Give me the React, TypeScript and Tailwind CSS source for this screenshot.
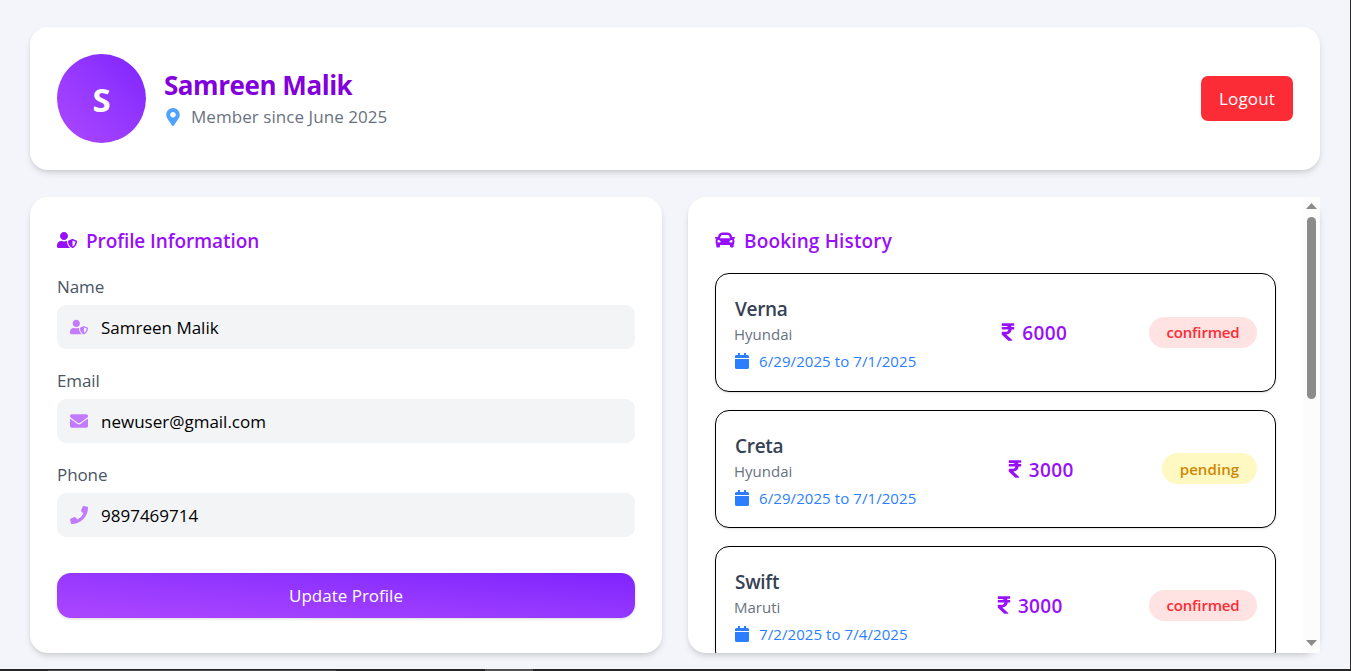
import type { ReactNode } from "react";
import {
  FaCalendar,
  FaCar,
  FaEnvelope,
  FaMapMarkerAlt,
  FaPhone,
  FaRupeeSign,
  FaUserShield,
} from "react-icons/fa";

type Status = "confirmed" | "pending";

interface Booking {
  model: string;
  brand: string;
  dates: string;
  price: number;
  status: Status;
}

const bookings: Booking[] = [
  { model: "Verna", brand: "Hyundai", dates: "6/29/2025 to 7/1/2025", price: 6000, status: "confirmed" },
  { model: "Creta", brand: "Hyundai", dates: "6/29/2025 to 7/1/2025", price: 3000, status: "pending" },
  { model: "Swift", brand: "Maruti", dates: "7/2/2025 to 7/4/2025", price: 3000, status: "confirmed" },
];

const statusStyles: Record<Status, string> = {
  confirmed: "bg-[#ffe2e2] text-[#fb2c36] tracking-[-0.15px] w-[108px]",
  pending: "bg-[#fef9c2] text-[#d08700] tracking-[0.1px] w-[95px]",
};

const cardShadow = "shadow-[0_4px_7px_-1px_rgba(0,0,0,0.12),0_2px_5px_-2px_rgba(0,0,0,0.12)]";

function Field({ label, value, icon }: { label: string; value: string; icon: ReactNode }) {
  return (
    <div>
      <div className="mb-[5px] h-[27px] text-[17px] leading-[27px] tracking-[-0.1px] text-[#4a5565]">{label}</div>
      <div className="flex h-[44px] items-center rounded-[9px] bg-[#f3f4f6] pl-[13px]">
        <span className="mr-[13px] text-[18px] text-[#c27aff]">{icon}</span>
        <span className="text-[17px] leading-[27px] text-black">{value}</span>
      </div>
    </div>
  );
}

function BookingCard({ booking }: { booking: Booking }) {
  return (
    <div className="flex h-[118.5px] shrink-0 items-center justify-between rounded-[14px] border border-black bg-white px-[18px] shadow-sm">
      <div>
        <div className="h-[31px] pl-px text-[19px] leading-[34px] font-semibold tracking-[-0.3px] text-[#364153]">
          {booking.model}
        </div>
        <div className="h-[22px] text-[15px] leading-[22px] text-[#6a7282]">{booking.brand}</div>
        <div className="mt-[5px] flex h-[22px] items-center text-[#2b7fff]">
          <FaCalendar className="mr-[9px] text-[16px]" />
          <span className="text-[15px] leading-[22px] tracking-[0.08px]">{booking.dates}</span>
        </div>
      </div>
      <div className="flex items-center text-[#9810fa]">
        <FaRupeeSign className="mr-[4px] text-[20px]" />
        <span className="pt-[3px] text-[19px] leading-[31px] font-semibold tracking-[0.35px]">{booking.price}</span>
      </div>
      <div
        className={`flex h-[31px] items-center justify-center rounded-full text-[15px] font-semibold ${statusStyles[booking.status]}`}
      >
        {booking.status}
      </div>
    </div>
  );
}

function Scrollbar() {
  return (
    <div className="flex w-[17px] shrink-0 flex-col items-center bg-[#fcfcfc]">
      <svg className="mt-[6px] h-[6px] w-[11px]" viewBox="0 0 11 6" fill="#8b8b8b">
        <path d="M5.5 0L11 6H0z" />
      </svg>
      <div className="mt-[8px] h-[182px] w-[9px] rounded-full bg-[#8b8b8b]" />
      <div className="flex-1" />
      <svg className="mb-[7px] h-[6px] w-[11px]" viewBox="0 0 11 6" fill="#8b8b8b">
        <path d="M0 0h11L5.5 6z" />
      </svg>
    </div>
  );
}

export default function App() {
  return (
    <div className="flex h-[671px] w-[1351px] flex-col overflow-hidden bg-[#f4f5fa] font-['Open_Sans','Noto_Sans',sans-serif]">
      <div className="flex h-[669px] flex-col gap-[27px] border-r border-[#2b2b2d] px-[30px] pt-[27px]">
        <header
          className={`flex h-[143px] shrink-0 items-center justify-between rounded-[18px] bg-white px-[27px] ${cardShadow}`}
        >
          <div className="flex items-center gap-[18px]">
            <div className="flex size-[89px] items-center justify-center rounded-full bg-linear-to-tr from-[#ad46ff] to-[#7f22fe] pt-[2px] text-[33px] font-bold text-white">
              S
            </div>
            <div>
              <h1 className="h-[36px] text-[26px] leading-[36px] font-bold tracking-[-0.45px] text-[#8200db]">
                Samreen Malik
              </h1>
              <div className="flex h-[27px] items-center">
                <FaMapMarkerAlt className="mr-[9px] text-[18px] text-[#51a2ff]" />
                <span className="text-[17px] leading-[27px] tracking-[0.06px] text-[#6a7282]">
                  Member since June 2025
                </span>
              </div>
            </div>
          </div>
          <button className="h-[45px] w-[92px] rounded-[7px] bg-[#fb2c36] text-[17px] tracking-[0.2px] text-white">
            Logout
          </button>
        </header>

        <main className="flex h-[456px] shrink-0 gap-[26px]">
          <section className={`flex w-[632px] flex-col rounded-[18px] bg-white px-[27px] pt-[27px] ${cardShadow}`}>
            <h2 className="mb-[18px] flex h-[31px] shrink-0 items-center text-[19px] font-semibold tracking-[-0.1px] text-[#9810fa]">
              <FaUserShield className="mr-[9px] text-[20px]" />
              <span className="pt-[4px]">Profile Information</span>
            </h2>
            <div className="flex flex-col gap-[18px]">
              <Field label="Name" value="Samreen Malik" icon={<FaUserShield />} />
              <Field label="Email" value="newuser@gmail.com" icon={<FaEnvelope />} />
              <Field label="Phone" value="9897469714" icon={<FaPhone />} />
            </div>
            <button className="mt-[36px] h-[45px] shrink-0 rounded-[14px] bg-linear-to-tr from-[#ad46ff] to-[#7f22fe] text-[17px] text-white shadow-[0_1px_3px_rgba(0,0,0,0.15)]">
              Update Profile
            </button>
          </section>

          <section className={`flex w-[632px] rounded-[18px] bg-white ${cardShadow}`}>
            <div className="flex flex-1 flex-col overflow-hidden rounded-l-[18px] pt-[27px] pr-[27px] pl-[27px]">
              <h2 className="mb-[18px] flex h-[31px] shrink-0 items-center text-[19px] font-semibold tracking-[0.15px] text-[#9810fa]">
                <FaCar className="mr-[9px] text-[20px]" />
                <span className="pt-[4px]">Booking History</span>
              </h2>
              <div className="flex flex-col gap-[18px]">
                {bookings.map((booking) => (
                  <BookingCard key={booking.model} booking={booking} />
                ))}
              </div>
            </div>
            <Scrollbar />
          </section>
        </main>
      </div>
      <div className="flex h-[2px] shrink-0 bg-[#252526]">
        <div className="ml-[48px] mt-px h-px w-[288px] bg-[#4b4b4c]" />
        <div className="ml-[149px] w-[48px] bg-[#505051]" />
      </div>
    </div>
  );
}
